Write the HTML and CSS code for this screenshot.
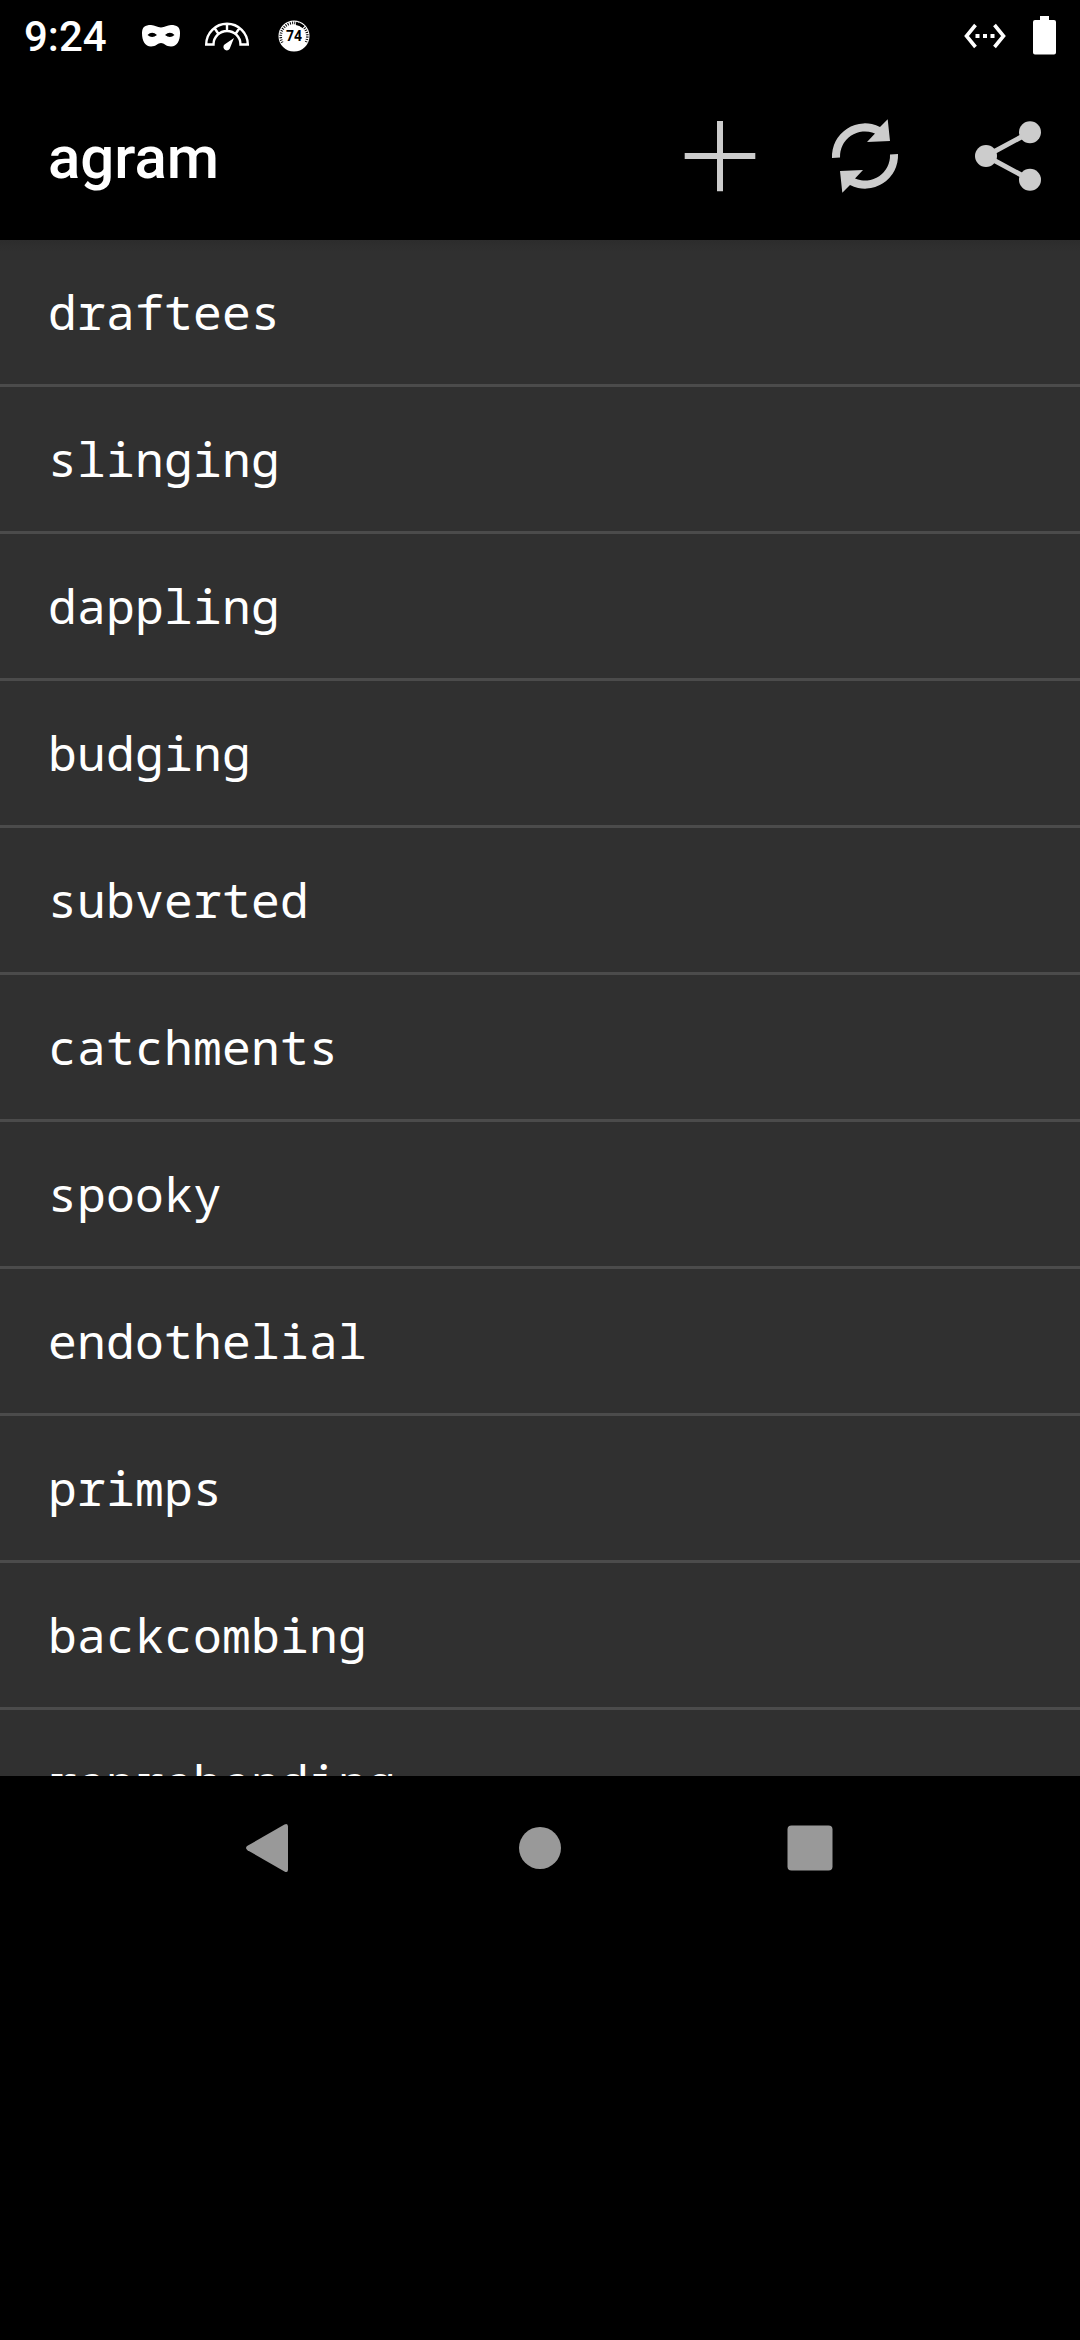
FILE: index.html
```html
<!DOCTYPE html>
<html lang="en">
<head>
<meta charset="utf-8">
<title>agram</title>
<link rel="stylesheet" href="styles.css">
</head>
<body>
<header class="status">
  <span class="clock">9:24</span>
  <div class="notices">
    <svg width="40" height="24" viewBox="0 0 40 24"><path fill="#fff" fill-rule="evenodd" d="M10 1C14 1 16 3.500 20 3.500S26 1 30 1C36 1 39 3 39 9C39 17 36 22.500 30 22.500C25 22.500 23 19 20 19S15 22.500 10 22.500C4 22.500 1 17 1 9C1 3 4 1 10 1ZM6.500 11Q11 15 16 11Q11 6.500 6.500 11ZM24 11Q29 15 33.500 11Q29 6.500 24 11Z"/></svg>
    <svg width="44" height="30" viewBox="0 0 44 30"><path fill="none" stroke="#fff" stroke-width="2.400" d="M1.200 22.500A20.800 20.800 0 0 1 42.800 22.500H35.500A13.500 13.500 0 0 0 8.500 22.500ZM22 1V9M9.500 6L13.500 12M34.500 6L30.500 12"/><path fill="#fff" d="M29 16L25.200 25.500A3.400 3.400 0 1 1 19.500 22.500Z"/></svg>
    <div class="badge">
      <svg width="32" height="32" viewBox="0 0 32 32"><circle cx="16" cy="16" r="15.500" fill="#fff"/><path d="M4.300 22.500A13.300 13.300 0 1 1 27.700 22.500" fill="none" stroke="#000" stroke-width="2.600" stroke-dasharray="1 1.300"/><path d="M18 3.500A13 13 0 0 1 25.500 7" fill="none" stroke="#000" stroke-width="3"/></svg>
      <span class="badge-number">74</span>
    </div>
  </div>
  <div class="system">
    <svg width="42" height="26" viewBox="0 0 42 26"><path fill="none" stroke="#fff" stroke-width="3.600" d="M11.500 2L2.500 13L11.500 24M30.500 2L39.500 13L30.500 24"/><path fill="#fff" d="M11.500 11h4v4h-4zM19 11h4v4h-4zM26.500 11h4v4h-4z"/></svg>
    <svg width="23" height="39" viewBox="0 0 23 39"><path fill="#fff" d="M7 0H16V4H21Q23 4 23 6V36.500Q23 38.500 21 38.500H2Q0 38.500 0 36.500V6Q0 4 2 4H7Z"/></svg>
  </div>
</header>
<div class="toolbar">
  <h1 class="title">agram</h1>
  <div class="actions">
    <svg width="144" height="144" viewBox="648 84 144 144"><path fill="#ccc" d="M717 121H723V153H755.300V159H723V191.300H717V159H684.700V153H717Z"/></svg>
    <svg width="144" height="144" viewBox="792 84 144 144"><g fill="#ccc"><path d="M832 158A33 33 0 0 1 880 127L887.700 119.300L890 141L867 142L875 133.500A25 25 0 0 0 840 157.500Z"/><path d="M832 158A33 33 0 0 1 880 127L887.700 119.300L890 141L867 142L875 133.500A25 25 0 0 0 840 157.500Z" transform="rotate(180 865 156)"/></g></svg>
    <svg width="144" height="144" viewBox="936 84 144 144"><path stroke="#ccc" stroke-width="5" fill="none" d="M1030 132.300L986 156L1030 179.700"/><g fill="#ccc"><circle cx="986" cy="156" r="11"/><circle cx="1030" cy="132.300" r="11"/><circle cx="1030" cy="179.700" r="11"/></g></svg>
  </div>
</div>
<ul class="words">
  <li class="word">draftees</li>
  <li class="word">slinging</li>
  <li class="word">dappling</li>
  <li class="word">budging</li>
  <li class="word">subverted</li>
  <li class="word">catchments</li>
  <li class="word">spooky</li>
  <li class="word">endothelial</li>
  <li class="word">primps</li>
  <li class="word">backcombing</li>
  <li class="word">reprehending</li>
</ul>
<nav class="nav">
  <svg width="60" height="60" viewBox="0 0 60 60"><path fill="#999" d="M7.500 27.800L44.500 6.500Q48 4.800 48 8.500V51.500Q48 55.200 44.500 53.500L7.500 32.200Q4.500 30 7.500 27.800Z"/></svg>
  <svg width="60" height="60" viewBox="0 0 60 60"><circle cx="30" cy="30" r="21" fill="#999"/></svg>
  <svg width="60" height="60" viewBox="0 0 60 60"><rect x="7.500" y="7.500" width="45" height="45" rx="4" fill="#999"/></svg>
</nav>
</body>
</html>
```

FILE: styles.css
```css
* { box-sizing: border-box; }
body { margin: 0; width: 1080px; height: 2340px; overflow: hidden; background: #000; color: #fff; font-family: Roboto, sans-serif; }
svg { display: block; flex: none; }
.status { display: flex; height: 72px; padding: 0 24px; }
.clock { width: 117px; font-size: 42px; font-weight: 500; line-height: 74px; }
.notices { display: flex; align-items: flex-start; gap: 24px; padding-top: 22px; }
.notices > :first-child { margin-top: 2px; }
.badge { display: grid; width: 32px; height: 32px; margin: -2px 0 0 5px; }
.badge > * { grid-area: 1 / 1; }
.badge-number { color: #000; font-size: 14px; font-weight: 700; line-height: 33px; text-align: center; z-index: 1; }
.system { display: flex; align-items: flex-start; gap: 27px; margin-left: auto; padding-top: 16px; }
.system > :first-child { margin-top: 7px; }
.toolbar { display: flex; justify-content: space-between; height: 168px; padding-left: 48px; }
.title { margin: 0; font-size: 60px; font-weight: 500; line-height: 172px; }
.actions { display: flex; padding-top: 12px; }
.words { height: 1536px; margin: 0; padding: 0; overflow: hidden; list-style: none; background: linear-gradient(#2c2c2c, #303030 12px); }
.word { height: 147px; padding-left: 48px; border-bottom: 3px solid #4b4b4b; font-family: "Droid Sans Mono", "Noto Sans Mono", "Liberation Mono", monospace; font-size: 48px; letter-spacing: 0.2px; line-height: 144px; }
.nav { display: flex; justify-content: space-between; height: 144px; padding: 42px 240px; }
```
